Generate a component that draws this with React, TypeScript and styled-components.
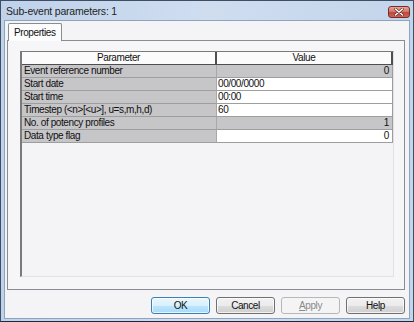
import styled, { createGlobalStyle } from "styled-components";

const GlobalStyle = createGlobalStyle`
html, body {
  margin: 0;
  padding: 0;
  background: #ffffff;
}
* {
  box-sizing: border-box;
}
`

const Window = styled.div`
width: 414px;
height: 322px;
display: flex;
flex-direction: column;
border: 1px solid #3b4f66;
border-bottom-color: #1b2a3a;
background: linear-gradient(90deg, #bfd2ea 0%, #cfddef 50%, #c3d5eb 100%);
font-family: "Liberation Sans", Arial, sans-serif;
font-size: 10px;
letter-spacing: -0.4px;
color: #111;
`

const TitleBar = styled.div`
height: 19px;
display: flex;
align-items: center;
justify-content: space-between;
padding: 0 3px 0 5px;
`

const Title = styled.div`
font-size: 10.5px;
letter-spacing: -0.2px;
color: #1e1e1e;
padding-top: 1px;
`

const CloseButton = styled.div`
width: 22px;
height: 12px;
margin-top: 2px;
border: 1px solid #7a2b26;
border-radius: 3px;
background: linear-gradient(180deg, #e3a69c 0%, #d2776a 45%, #bf4a3a 55%, #c9625a 100%);
display: flex;
align-items: center;
justify-content: center;
`

const Body = styled.div`
flex: 1;
margin: 0 3px 2px 3px;
border: 1px solid #8ea3bd;
background: #f4f3f6;
display: flex;
flex-direction: column;
padding: 2px 4px 0 2px;
`

const TabStrip = styled.div`
display: flex;
padding-left: 1px;
position: relative;
z-index: 1;
`

const Tab = styled.div`
height: 18px;
padding: 3px 5px 0 5px;
border: 1px solid #898c95;
border-bottom: none;
border-radius: 2px 2px 0 0;
background: #fcfcfc;
margin-bottom: -1px;
`

const TabPanel = styled.div`
height: 250px;
border: 1px solid #898c95;
background: #f6f5f8;
padding: 10px 10px 12px 12px;
display: flex;
`

const Grid = styled.div`
flex: 1;
border: 1px solid #e2e2e2;
border-top-color: #7a7a7a;
border-left: 2px solid #7a7a7a;
background: #f4f3f6;
display: flex;
flex-direction: column;
`

const Row = styled.div`
display: grid;
grid-template-columns: 195px 1fr;
height: 13px;
`

const HeaderCell = styled.div`
background: #fbfbfb;
border-right: 2px solid #4e4e4e;
border-bottom: 1px solid #4e4e4e;
text-align: center;
line-height: 12px;
`

const LabelCell = styled.div`
background: #c6c5c8;
border-right: 1px solid #a8a8a8;
border-bottom: 1px solid #9e9e9e;
padding-left: 2px;
line-height: 12px;
white-space: nowrap;
`

const ValueCell = styled.div<{ $readonly?: boolean; $right?: boolean }>`
background: ${(p) => (p.$readonly ? "#c6c5c8" : "#ffffff")};
border-right: 1px solid #9e9e9e;
border-bottom: 1px solid #9e9e9e;
text-align: ${(p) => (p.$right ? "right" : "left")};
padding: 0 3px 0 1px;
line-height: 12px;
`

const ButtonRow = styled.div`
display: flex;
justify-content: flex-end;
gap: 6px;
margin-top: 7px;
`

const Button = styled.div<{ $default?: boolean; $disabled?: boolean }>`
width: 59px;
height: 17px;
border: 1px solid ${(p) => (p.$default ? "#3c7fb1" : p.$disabled ? "#b5b8bb" : "#707070")};
border-radius: 3px;
background: ${(p) =>
  p.$disabled
    ? "#f4f4f4"
    : p.$default
    ? "linear-gradient(180deg, #eaf6fd 0%, #d9f0fc 50%, #bee6fd 51%, #a7d9f5 100%)"
    : "linear-gradient(180deg, #f2f2f2 0%, #ebebeb 50%, #dddddd 51%, #cfcfcf 100%)"};
box-shadow: inset 0 0 0 1px ${(p) => (p.$disabled ? "#f4f4f4" : "rgba(255,255,255,0.7)")};
color: ${(p) => (p.$disabled ? "#8a8a8a" : "#111")};
display: flex;
align-items: center;
justify-content: center;
line-height: 12px;
`

const rows = [
  { label: "Event reference number", value: "0", readonly: true },
  { label: "Start date", value: "00/00/0000", readonly: false },
  { label: "Start time", value: "00:00", readonly: false },
  { label: "Timestep (<n>[<u>], u=s,m,h,d)", value: "60", readonly: false },
  { label: "No. of potency profiles", value: "1", readonly: true },
  { label: "Data type flag", value: "0", readonly: false, right: true },
];

const App = () => {
  return (
    <>
      <GlobalStyle />
      <Window>
        <TitleBar>
          <Title>Sub-event parameters: 1</Title>
          <CloseButton>
            <svg width="10" height="8" viewBox="0 0 10 8">
              <path d="M1.5 1 L8.5 7 M8.5 1 L1.5 7" stroke="#5a1a14" strokeWidth="2.6" strokeLinecap="round" />
              <path d="M1.5 1 L8.5 7 M8.5 1 L1.5 7" stroke="#ffffff" strokeWidth="1.6" strokeLinecap="round" />
            </svg>
          </CloseButton>
        </TitleBar>
        <Body>
          <TabStrip>
            <Tab>Properties</Tab>
          </TabStrip>
          <TabPanel>
            <Grid>
              <Row>
                <HeaderCell>Parameter</HeaderCell>
                <HeaderCell>Value</HeaderCell>
              </Row>
              {rows.map((r) => (
                <Row key={r.label}>
                  <LabelCell>{r.label}</LabelCell>
                  <ValueCell $readonly={r.readonly} $right={r.readonly || r.right}>
                    {r.value}
                  </ValueCell>
                </Row>
              ))}
            </Grid>
          </TabPanel>
          <ButtonRow>
            <Button $default>OK</Button>
            <Button>Cancel</Button>
            <Button $disabled>
              <span><u>A</u>pply</span>
            </Button>
            <Button>Help</Button>
          </ButtonRow>
        </Body>
      </Window>
    </>
  );
};

export default App;
